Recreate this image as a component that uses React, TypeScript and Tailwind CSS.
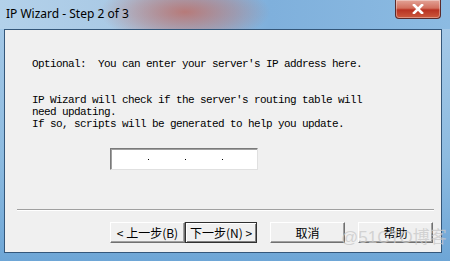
import React from 'react';

const mono = { fontFamily: '"Liberation Mono", "DejaVu Sans Mono", monospace' };

function ClassicButton({ label, primary }: { label: string; primary?: boolean }) {
  return (
    <button
      className={
        primary
          ? 'flex h-[21px] w-[72px] items-center justify-center border border-[#303030] bg-[#f0f0f0] text-[12px] text-black shadow-[inset_1px_1px_0_#ffffff,inset_-1px_-1px_0_#808080]'
          : 'flex h-[21px] w-[75px] items-center justify-center border border-t-white border-l-white border-r-[#707070] border-b-[#707070] bg-[#f0f0f0] text-[12px] text-black shadow-[inset_-1px_-1px_0_#a0a0a0]'
      }
      style={{ fontFamily: '"Noto Sans CJK SC", "Liberation Sans", sans-serif' }}
    >
      {label}
    </button>
  );
}

export default function App() {
  return (
    <div className="relative flex h-[261px] w-[450px] flex-col overflow-hidden bg-[linear-gradient(180deg,#a9cbe8_0%,#8dbbe0_60%,#6ea6d6_100%)]">
      {/* title bar */}
      <div className="flex h-[29px] items-start justify-between bg-[radial-gradient(ellipse_85px_32px_at_185px_12px,rgba(190,105,95,0.8),rgba(190,105,95,0.35)_60%,rgba(190,105,95,0)),linear-gradient(90deg,#b3d1ea_0%,#a8c8e4_30%,#7fb0dc_60%,#8cbbe2_100%)]">
        <span
          className="ml-[6px] mt-[6px] text-[12px] leading-[16px] text-black"
          style={{ fontFamily: '"Noto Sans", "Liberation Sans", sans-serif' }}
        >
          IP Wizard - Step 2 of 3
        </span>
        <div className="mr-[9px] flex h-[19px] w-[46px] items-center justify-center rounded-b-[4px] border border-t-0 border-[#5a2a2a] bg-[linear-gradient(180deg,#e3a397_0%,#d2705e_45%,#b83222_55%,#cc5a3e_100%)] shadow-[inset_0_0_0_1px_rgba(255,255,255,0.35)]">
          <svg width="12" height="10" viewBox="0 0 12 10">
            <path d="M2 1 L10 9 M10 1 L2 9" stroke="#ffffff" strokeWidth="2.6" strokeLinecap="square" />
          </svg>
        </div>
      </div>

      {/* client area */}
      <div className="ml-[4px] mr-[8px] flex h-[224px] flex-col border border-[#34577a] bg-[#f0f0f0]">
        <div className="pl-[27px] pt-[28px] text-[11px] leading-[12px] tracking-[-0.6px] text-black" style={mono}>
          <p className="whitespace-pre">Optional:  You can enter your server's IP address here.</p>
          <p className="mt-[24px] whitespace-pre">IP Wizard will check if the server's routing table will</p>
          <p className="whitespace-pre">need updating.</p>
          <p className="whitespace-pre">If so, scripts will be generated to help you update.</p>
        </div>

        <div className="ml-[105px] mt-[18px] flex h-[22px] w-[148px] items-center border border-t-[#7a7a7a] border-l-[#7a7a7a] border-r-[#e0e0e0] border-b-[#e0e0e0] bg-white shadow-[inset_1px_1px_0_#a0a0a0]">
          <span className="ml-[37px] h-[1px] w-[1px] bg-black" />
          <span className="ml-[36px] h-[1px] w-[1px] bg-black" />
          <span className="ml-[36px] h-[1px] w-[1px] bg-black" />
        </div>

        <div className="ml-[12px] mr-[7px] mt-[39px] h-[2px] border-t border-b border-t-[#a0a0a0] border-b-white" />

        <div className="ml-[105px] mt-[11px] flex items-center">
          <ClassicButton label="< 上一步(B)" />
          <ClassicButton label="下一步(N) >" primary />
          <div className="w-[13px]" />
          <ClassicButton label="取消" />
          <div className="w-[13px]" />
          <ClassicButton label="帮助" />
        </div>
      </div>

      {/* watermark */}
      <span
        className="pointer-events-none absolute left-[341px] top-[229px] text-[17px] leading-[18px] text-[rgba(200,200,200,0.75)]"
        style={{ fontFamily: '"Liberation Sans", "Noto Sans CJK SC", sans-serif' }}
      >
        @51CTO博客
      </span>
    </div>
  );
}
